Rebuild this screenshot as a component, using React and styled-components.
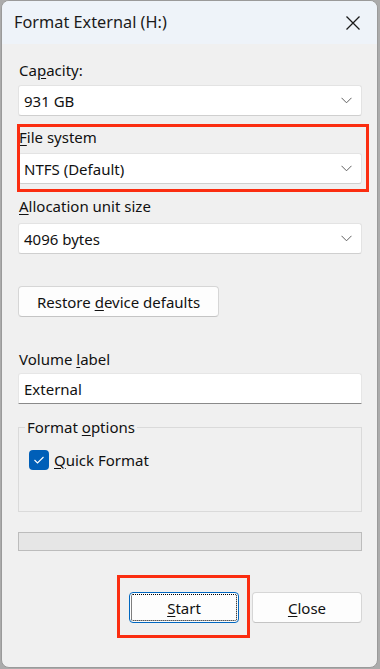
import React from 'react'
import styled, { createGlobalStyle } from 'styled-components'

const GlobalStyle = createGlobalStyle`
  html, body {
    margin: 0;
    padding: 0;
    background: #ababab;
  }
  body {
    font-family: "Noto Sans", "Open Sans", sans-serif;
    color: #111111;
  }
`

const Window = styled.div`
  box-sizing: border-box;
  width: 377px;
  height: 668px;
  margin-left: 1px;
  border: 1px solid #9a9a9a;
  border-radius: 8px;
  background: #f0f0f0;
  overflow: hidden;
  display: flex;
  flex-direction: column;
`

const TitleBar = styled.div`
  height: 43px;
  background: #eef3f9;
  display: flex;
  align-items: center;
  justify-content: space-between;
  padding: 0 16px 0 12px;
  flex-shrink: 0;
`

const Title = styled.div`
  font-size: 16.3px;
  color: #1b1b1b;
  padding-bottom: 2px;
`

const CloseIcon = styled.svg`
  width: 16px;
  height: 16px;
  display: block;
`

const Body = styled.div`
  padding: 0 15px 0 16px;
  display: flex;
  flex-direction: column;
`

const Field = styled.div`
  display: flex;
  flex-direction: column;
  margin-top: ${p => p.$top || 0}px;
  position: relative;
`

const Highlight = styled.div`
  position: relative;
  margin-top: ${p => p.$top || 0}px;
  &::after {
    content: '';
    position: absolute;
    top: ${p => p.$t}px;
    left: ${p => p.$l}px;
    right: ${p => p.$r}px;
    bottom: ${p => p.$b}px;
    border: 3px solid #fb2d10;
    pointer-events: none;
  }
`

const Label = styled.div`
  font-size: 15px;
  line-height: 20px;
  margin-bottom: ${p => p.$gap || 5}px;
  padding-left: 1px;
`

const Key = styled.span`
  text-decoration: underline;
  text-underline-offset: 2px;
  text-decoration-thickness: 1px;
`

const Select = styled.div`
  box-sizing: border-box;
  height: 31px;
  background: #ffffff;
  border: 1px solid #e3e3e3;
  border-bottom-color: #cfcfcf;
  border-radius: 3px;
  display: flex;
  align-items: center;
  justify-content: space-between;
  padding: 0 9px 0 5px;
  font-size: 15px;
`

const Chevron = styled.svg`
  width: 11px;
  height: 7px;
  display: block;
`

const Button = styled.div`
  box-sizing: border-box;
  height: 31px;
  width: ${p => p.$w}px;
  background: #fdfdfd;
  border: 1px solid ${p => (p.$primary ? '#0067c0' : '#d6d6d6')};
  border-bottom-color: ${p => (p.$primary ? '#0067c0' : '#c4c4c4')};
  border-radius: 4px;
  display: flex;
  align-items: center;
  justify-content: center;
  font-size: 15px;
  position: relative;
  ${p =>
    p.$primary &&
    `
    &::before {
      content: '';
      position: absolute;
      inset: 1px;
      border: 1px dotted #000;
      border-radius: 2px;
    }
  `}
`

const RestoreRow = styled.div`
  margin-top: 32px;
  display: flex;
`

const Input = styled.div`
  box-sizing: border-box;
  height: 31px;
  background: #ffffff;
  border: 1px solid #e6e6e6;
  border-bottom: 1px solid #8a8a8a;
  border-radius: 3px 3px 0 0;
  display: flex;
  align-items: center;
  padding: 0 5px;
  font-size: 15px;
`

const Group = styled.fieldset`
  box-sizing: border-box;
  margin: 14px 0 0 0;
  height: 94px;
  border: 1px solid #dadada;
  padding: 0 10px;
  min-width: 0;
`

const Legend = styled.legend`
  font-size: 15px;
  line-height: 18px;
  padding: 0 2px;
  margin-left: -4px;
`

const CheckRow = styled.div`
  display: flex;
  align-items: center;
  gap: 5px;
  margin-top: 14px;
  font-size: 15px;
`

const Box = styled.div`
  width: 20px;
  height: 20px;
  border-radius: 4px;
  background: #005fb8;
  display: flex;
  align-items: center;
  justify-content: center;
`

const Progress = styled.div`
  box-sizing: border-box;
  margin-top: 20px;
  height: 19px;
  background: #e6e6e6;
  border: 1px solid #bcbcbc;
`

const Footer = styled.div`
  margin-top: 41px;
  display: flex;
  justify-content: flex-end;
  gap: 13px;
`

const Arrow = () => (
  <Chevron viewBox="0 0 11 7">
    <polyline points="0.5,0.8 5.5,5.8 10.5,0.8" fill="none" stroke="#606060" strokeWidth="1" />
  </Chevron>
)

const Dropdown = ({ value }) => (
  <Select>
    <span>{value}</span>
    <Arrow />
  </Select>
)

export default function App() {
  return (
    <>
      <GlobalStyle />
      <Window>
        <TitleBar>
          <Title>Format External (H:)</Title>
          <CloseIcon viewBox="0 0 16 16">
            <path d="M1.5 1.5 L14.5 14.5 M14.5 1.5 L1.5 14.5" stroke="#1a1a1a" strokeWidth="1.3" fill="none" />
          </CloseIcon>
        </TitleBar>
        <Body>
          <Field $top={16}>
            <Label>
              Ca<Key>p</Key>acity:
            </Label>
            <Dropdown value="931 GB" />
          </Field>

          <Highlight $top={11} $t={-3} $l={-1} $r={-7} $b={-8}>
            <Field>
              <Label $gap={6}>
                <Key>F</Key>ile system
              </Label>
              <Dropdown value="NTFS (Default)" />
            </Field>
          </Highlight>

          <Field $top={12}>
            <Label $gap={7}>
              <Key>A</Key>llocation unit size
            </Label>
            <Dropdown value="4096 bytes" />
          </Field>

          <RestoreRow>
            <Button $w={201}>
              <span>
                Restore <Key>d</Key>evice defaults
              </span>
            </Button>
          </RestoreRow>

          <Field $top={32}>
            <Label $gap={4}>
              Volume <Key>l</Key>abel
            </Label>
            <Input>External</Input>
          </Field>

          <Group>
            <Legend>
              Format <Key>o</Key>ptions
            </Legend>
            <CheckRow>
              <Box>
                <svg width="12" height="10" viewBox="0 0 12 10">
                  <polyline points="1.5,5 4.5,8 10.5,2" fill="none" stroke="#ffffff" strokeWidth="1.1" />
                </svg>
              </Box>
              <span>
                <Key>Q</Key>uick Format
              </span>
            </CheckRow>
          </Group>

          <Progress />

          <Footer>
            <Highlight $t={-17} $l={-12} $r={-11} $b={-15}>
              <Button $w={110} $primary>
                <span>
                  <Key>S</Key>tart
                </span>
              </Button>
            </Highlight>
            <Button $w={110}>
              <span>
                <Key>C</Key>lose
              </span>
            </Button>
          </Footer>
        </Body>
      </Window>
    </>
  )
}
